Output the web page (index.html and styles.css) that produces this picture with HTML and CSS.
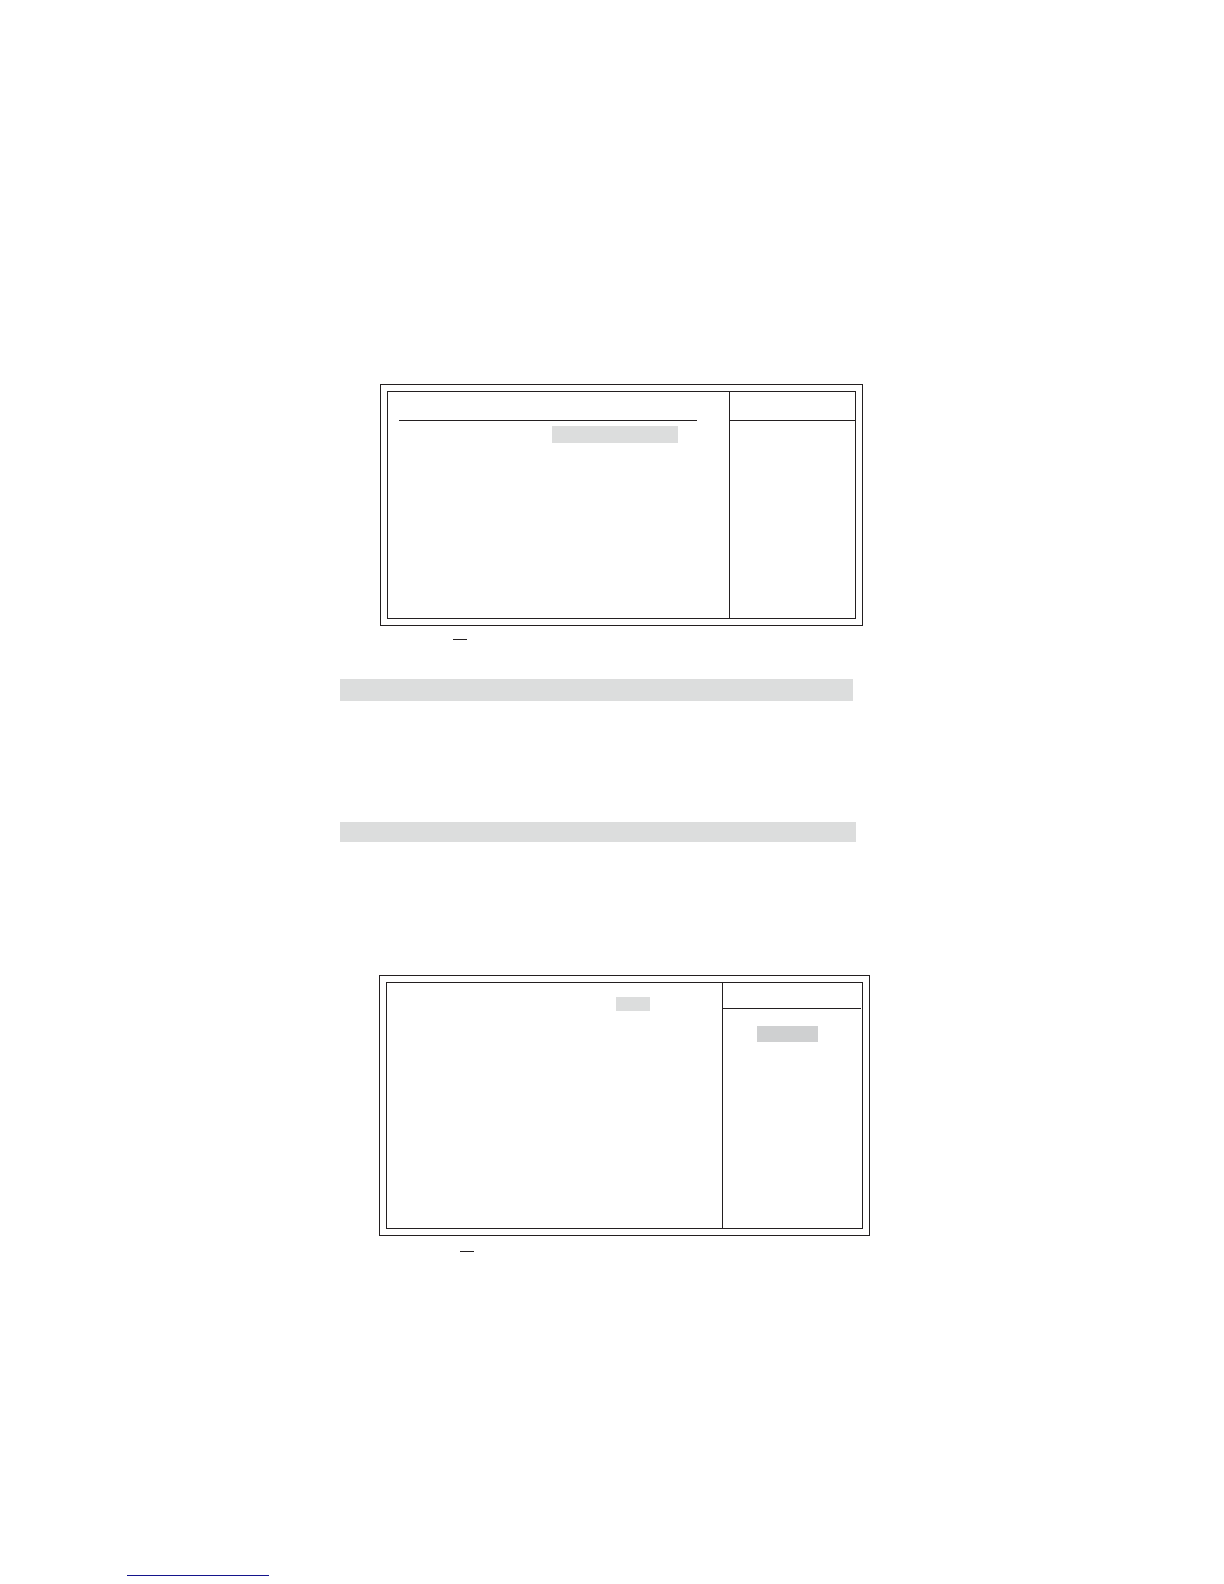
FILE: index.html
```html
<!DOCTYPE html>
<html lang="en">
<head>
  <meta charset="UTF-8" />
  <title>Setup screens</title>
  <meta name="viewport" content="width=device-width, initial-scale=1.0" />
  <link rel="stylesheet" href="styles.css">
</head>
<body>
  <main class="content">
    <section class="screen screen-main">
      <div class="screen-inner">
        <div class="screen-body">
          <div class="body-head"></div>
          <div class="highlight"></div>
        </div>
        <aside class="screen-help">
          <div class="help-head"></div>
        </aside>
      </div>
    </section>
    <div class="key-mark"></div>

    <div class="heading-bar"></div>
    <div class="heading-bar heading-bar-wide"></div>

    <section class="screen screen-sub">
      <div class="screen-inner">
        <div class="screen-body">
          <div class="highlight"></div>
        </div>
        <aside class="screen-help">
          <div class="help-head"></div>
          <div class="option"></div>
        </aside>
      </div>
    </section>
    <div class="key-mark key-mark-sub"></div>
  </main>

  <footer class="footer">
    <div class="footer-line"></div>
  </footer>
</body>
</html>
```

FILE: styles.css
```css
* {
  box-sizing: border-box;
}

body {
  margin: 0;
  background: #fff;
  color: #231f20;
  font-family: "Liberation Sans", Arial, sans-serif;
}

.content {
  display: flex;
  flex-direction: column;
  padding: 384px 354px 0 340px;
}

/* double-framed setup screens */
.screen {
  padding: 6px;
  border: 1px solid #231f20;
}

.screen-main {
  margin: 0 7px 0 40px;
}

.screen-sub {
  margin: 133px 0 0 39px;
}

.screen-inner {
  display: grid;
  grid-template-columns: 1fr 126px;
  min-height: 228px;
  border: 1px solid #231f20;
}

.screen-sub .screen-inner {
  grid-template-columns: 1fr 140px;
  min-height: 247px;
}

.screen-help {
  border-left: 1px solid #231f20;
}

.body-head,
.help-head {
  height: 29px;
  border-bottom: 1px solid #231f20;
}

.body-head {
  margin: 0 32px 0 11px;
}

.screen-sub .help-head {
  height: 26px;
  margin-right: 1px;
}

.highlight {
  width: 126px;
  height: 17px;
  margin: 5px 0 0 164px;
  background: #dcdddd;
}

.screen-sub .screen-body {
  padding-top: 14px;
}

.screen-sub .highlight {
  width: 34px;
  height: 14px;
  margin: 0 0 0 229px;
}

.option {
  width: 61px;
  height: 16px;
  margin: 17px 0 0 34px;
  background: #cfd0d1;
}

.key-mark {
  width: 14px;
  height: 1px;
  margin: 13px 0 0 113px;
  background: #231f20;
}

.key-mark-sub {
  margin: 15px 0 0 120px;
}

/* grey heading bars */
.heading-bar {
  height: 22px;
  margin: 39px 17px 0 0;
  background: #dcdddd;
}

.heading-bar-wide {
  height: 20px;
  margin: 121px 14px 0 0;
}

.footer {
  padding: 323px 127px 8px;
}

.footer-line {
  width: 142px;
  height: 1px;
  background: #14148c;
}
```
